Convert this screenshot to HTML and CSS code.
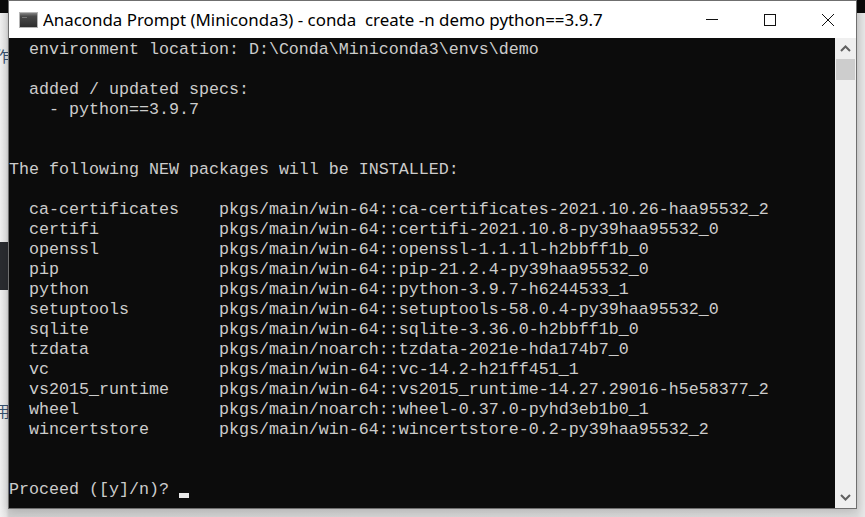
FILE: index.html
```html
<!DOCTYPE html>
<html lang="en">
<head>
<meta charset="utf-8">
<title>Anaconda Prompt (Miniconda3)</title>
<link rel="stylesheet" href="styles.css">
</head>
<body>
<div class="desktop">
  <div class="bg-top"></div>
  <div class="bg-band"></div>
  <span class="bg-glyph bg-glyph-a">作</span>
  <span class="bg-glyph bg-glyph-b">用</span>
  <section class="window">
    <header class="titlebar">
      <svg class="app-icon" width="19" height="16" viewBox="0 0 19 16" aria-hidden="true">
        <defs>
          <linearGradient id="ic" x1="0" y1="0" x2="0" y2="1">
            <stop offset="0" stop-color="#8c8c8c"/>
            <stop offset="0.25" stop-color="#4a4a4a"/>
            <stop offset="1" stop-color="#2c2c2c"/>
          </linearGradient>
        </defs>
        <rect x="0.5" y="0.5" width="18" height="15" fill="url(#ic)" stroke="#b5b5b5"/>
        <rect x="3" y="5" width="5" height="1" fill="#777"/>
      </svg>
      <span class="title">Anaconda Prompt (Miniconda3) - conda  create -n demo python==3.9.7</span>
      <div class="controls">
        <svg class="ctl" width="58" height="37" viewBox="0 0 58 37" aria-hidden="true"><path d="M23 18.500h12" stroke="#111" fill="none"/></svg>
        <svg class="ctl" width="58" height="37" viewBox="0 0 58 37" aria-hidden="true"><rect x="23.500" y="13.500" width="11" height="11" stroke="#111" fill="none"/></svg>
        <svg class="ctl" width="58" height="37" viewBox="0 0 58 37" aria-hidden="true"><path d="M23 13l12 12M35 13l-12 12" stroke="#111" fill="none"/></svg>
      </div>
    </header>
    <div class="body">
      <pre class="terminal">  environment location: D:\Conda\Miniconda3\envs\demo

  added / updated specs:
    - python==3.9.7


The following NEW packages will be INSTALLED:

  ca-certificates    pkgs/main/win-64::ca-certificates-2021.10.26-haa95532_2
  certifi            pkgs/main/win-64::certifi-2021.10.8-py39haa95532_0
  openssl            pkgs/main/win-64::openssl-1.1.1l-h2bbff1b_0
  pip                pkgs/main/win-64::pip-21.2.4-py39haa95532_0
  python             pkgs/main/win-64::python-3.9.7-h6244533_1
  setuptools         pkgs/main/win-64::setuptools-58.0.4-py39haa95532_0
  sqlite             pkgs/main/win-64::sqlite-3.36.0-h2bbff1b_0
  tzdata             pkgs/main/noarch::tzdata-2021e-hda174b7_0
  vc                 pkgs/main/win-64::vc-14.2-h21ff451_1
  vs2015_runtime     pkgs/main/win-64::vs2015_runtime-14.27.29016-h5e58377_2
  wheel              pkgs/main/noarch::wheel-0.37.0-pyhd3eb1b0_1
  wincertstore       pkgs/main/win-64::wincertstore-0.2-py39haa95532_2


Proceed ([y]/n)? <span class="cursor"></span></pre>
      <aside class="scrollbar">
        <svg class="arrow" width="21" height="21" viewBox="0 0 21 21" aria-hidden="true"><path d="M6 13l4.500-4.500L15 13" stroke="#606060" stroke-width="2" fill="none"/></svg>
        <div class="thumb"></div>
        <div class="track"></div>
        <svg class="arrow" width="21" height="21" viewBox="0 0 21 21" aria-hidden="true"><path d="M6 8l4.500 4.500L15 8" stroke="#606060" stroke-width="2" fill="none"/></svg>
      </aside>
    </div>
  </section>
</div>
</body>
</html>
```

FILE: styles.css
```css
html, body {
  margin: 0;
  padding: 0;
}

.desktop {
  position: relative;
  width: 865px;
  height: 517px;
  overflow: hidden;
  background: linear-gradient(90deg, #f1f1f1 0, #e6e6e6 6px, #d0d0d0 9px, #dcdcdc 857px, #e8e8e8 865px);
}

.bg-top {
  position: absolute;
  left: 0;
  top: 0;
  width: 100%;
  height: 13px;
  background: #0a0a0a;
}

.bg-band {
  position: absolute;
  left: 0;
  top: 242px;
  width: 9px;
  height: 48px;
  background: #2a2c30;
}

.bg-glyph {
  position: absolute;
  font-family: "Noto Sans CJK SC", sans-serif;
  font-size: 15px;
  line-height: 20px;
  color: #35506e;
}

.bg-glyph-a {
  left: -5px;
  top: 46px;
}

.bg-glyph-b {
  left: -5px;
  top: 401px;
}

.window {
  position: absolute;
  left: 8px;
  top: 0;
  width: 849px;
  height: 509px;
  box-sizing: border-box;
  border: 1px solid #6f6f6f;
  display: flex;
  flex-direction: column;
  box-shadow: 0 2px 10px rgba(0, 0, 0, 0.18);
}

.titlebar {
  flex: 0 0 37px;
  display: flex;
  align-items: center;
  background: #fff;
  padding-left: 10px;
}

.app-icon {
  flex: none;
  margin-right: 5px;
}

.title {
  flex: 1;
  font-family: "Noto Sans", sans-serif;
  font-size: 16.9px;
  color: #000;
  white-space: pre;
  overflow: hidden;
}

.controls {
  flex: none;
  display: flex;
  align-self: flex-start;
  margin-right: -1px;
}

.ctl {
  display: block;
}

.body {
  flex: 1;
  display: flex;
  min-height: 0;
}

.terminal {
  flex: 1;
  margin: 0;
  padding-top: 2px;
  background: #0c0c0c;
  color: #cccccc;
  font-family: "Liberation Mono", monospace;
  font-size: 16.67px;
  line-height: 20px;
  overflow: hidden;
}

.cursor {
  display: inline-block;
  width: 10px;
  height: 5px;
  background: #e8e8e8;
  vertical-align: -4px;
}

.scrollbar {
  flex: 0 0 21px;
  display: flex;
  flex-direction: column;
  align-items: center;
  background: #efefef;
}

.arrow {
  flex: none;
  display: block;
}

.thumb {
  flex: none;
  width: 19px;
  height: 21px;
  background: #cdcdcd;
}

.track {
  flex: 1;
}
```
